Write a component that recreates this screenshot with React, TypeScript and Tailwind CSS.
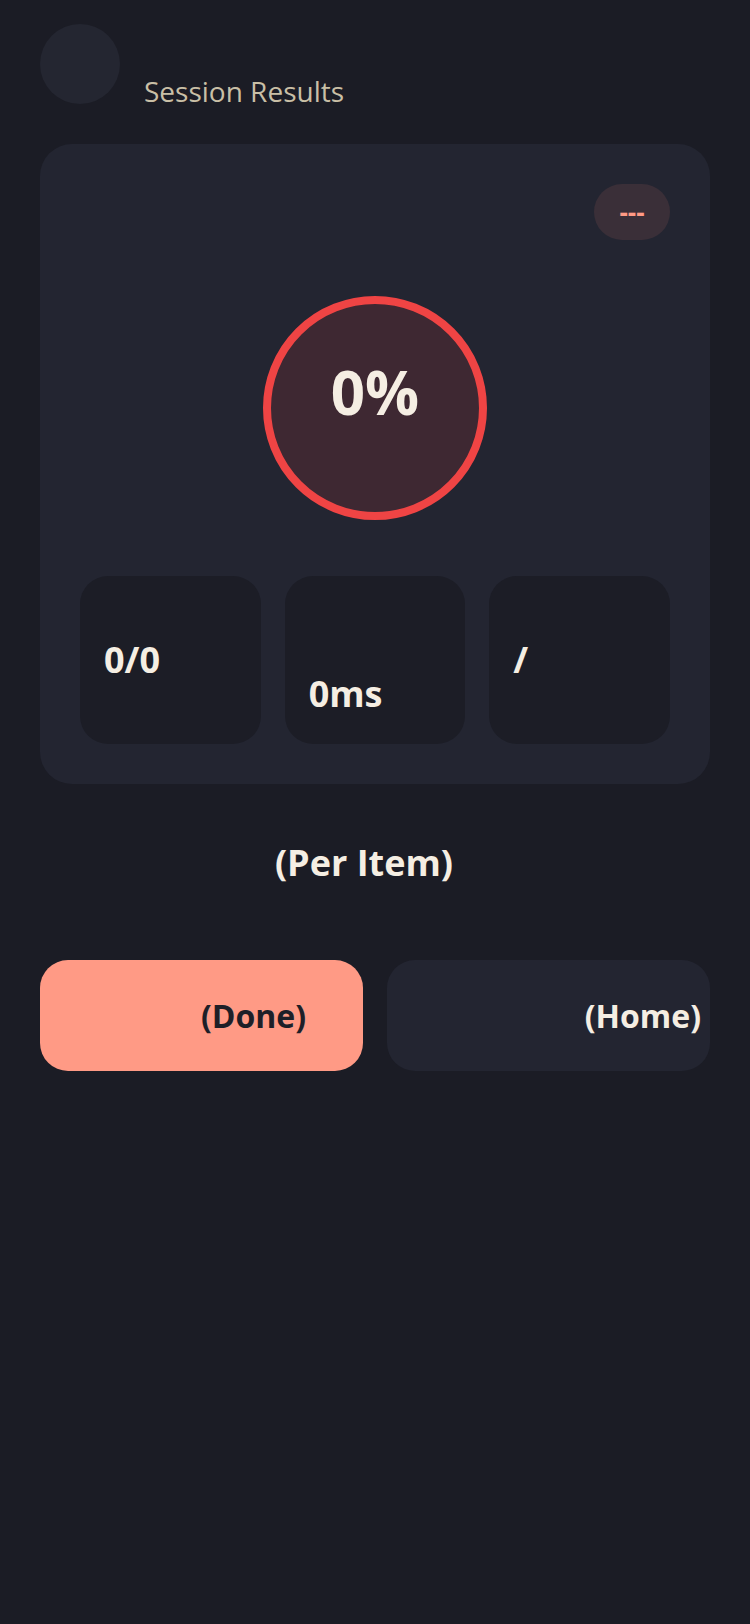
const FONT = { fontFamily: '"Open Sans", "Noto Sans", sans-serif' };

function StatBox({ value, offset }: { value: string; offset?: boolean }) {
  return (
    <div
      className={`flex h-[168px] flex-col justify-center rounded-[28px] bg-[#1c1d26] px-6 ${
        offset ? 'pt-[68px]' : ''
      }`}
    >
      <span className="text-[36px] font-bold leading-[1.3] text-[#f5eee3]">{value}</span>
    </div>
  );
}

export default function App() {
  return (
    <div className="min-h-[1624px] w-[750px] bg-[#1b1c25] px-10 pt-6" style={FONT}>
      {/* Header */}
      <div className="flex items-start gap-6">
        <div className="h-20 w-20 shrink-0 rounded-full bg-[#242631]" />
        <span className="mt-[47px] text-[28px] leading-[40px] text-[#c9bfa6]">Session Results</span>
      </div>

      {/* Result card */}
      <div className="mt-[33px] rounded-[32px] bg-[#232531] p-10">
        <div className="flex justify-end">
          <div className="flex h-14 w-[76px] items-center justify-center rounded-full bg-[#3a2f38]">
            <span className="text-[26px] font-bold leading-none text-[#ff9a85]">---</span>
          </div>
        </div>

        <div className="mt-14 flex justify-center">
          <div className="flex h-[224px] w-[224px] flex-col items-center rounded-full border-[8px] border-[#ef4444] bg-[#3e2832] pt-[52px]">
            <span className="text-[60px] font-bold leading-[1.2] text-[#f5eee3]">0%</span>
          </div>
        </div>

        <div className="mt-14 grid grid-cols-3 gap-6">
          <StatBox value="0/0" />
          <StatBox value="0ms" offset />
          <StatBox value="/" />
        </div>
      </div>

      <div className="mt-[54px] pr-[22px] text-center text-[36px] font-bold leading-[1.4] text-[#f5eee3]">
        (Per Item)
      </div>

      {/* Actions */}
      <div className="mt-[72px] grid grid-cols-2 gap-6">
        <button className="flex h-[111px] items-center justify-end rounded-[28px] bg-[#ff9a85] pr-[57px]">
          <span className="text-[32px] font-bold text-[#1e1f28]">(Done)</span>
        </button>
        <button className="flex h-[111px] items-center justify-end rounded-[28px] bg-[#232531] pr-[9px]">
          <span className="text-[32px] font-bold text-[#f5eee3]">(Home)</span>
        </button>
      </div>
    </div>
  );
}
